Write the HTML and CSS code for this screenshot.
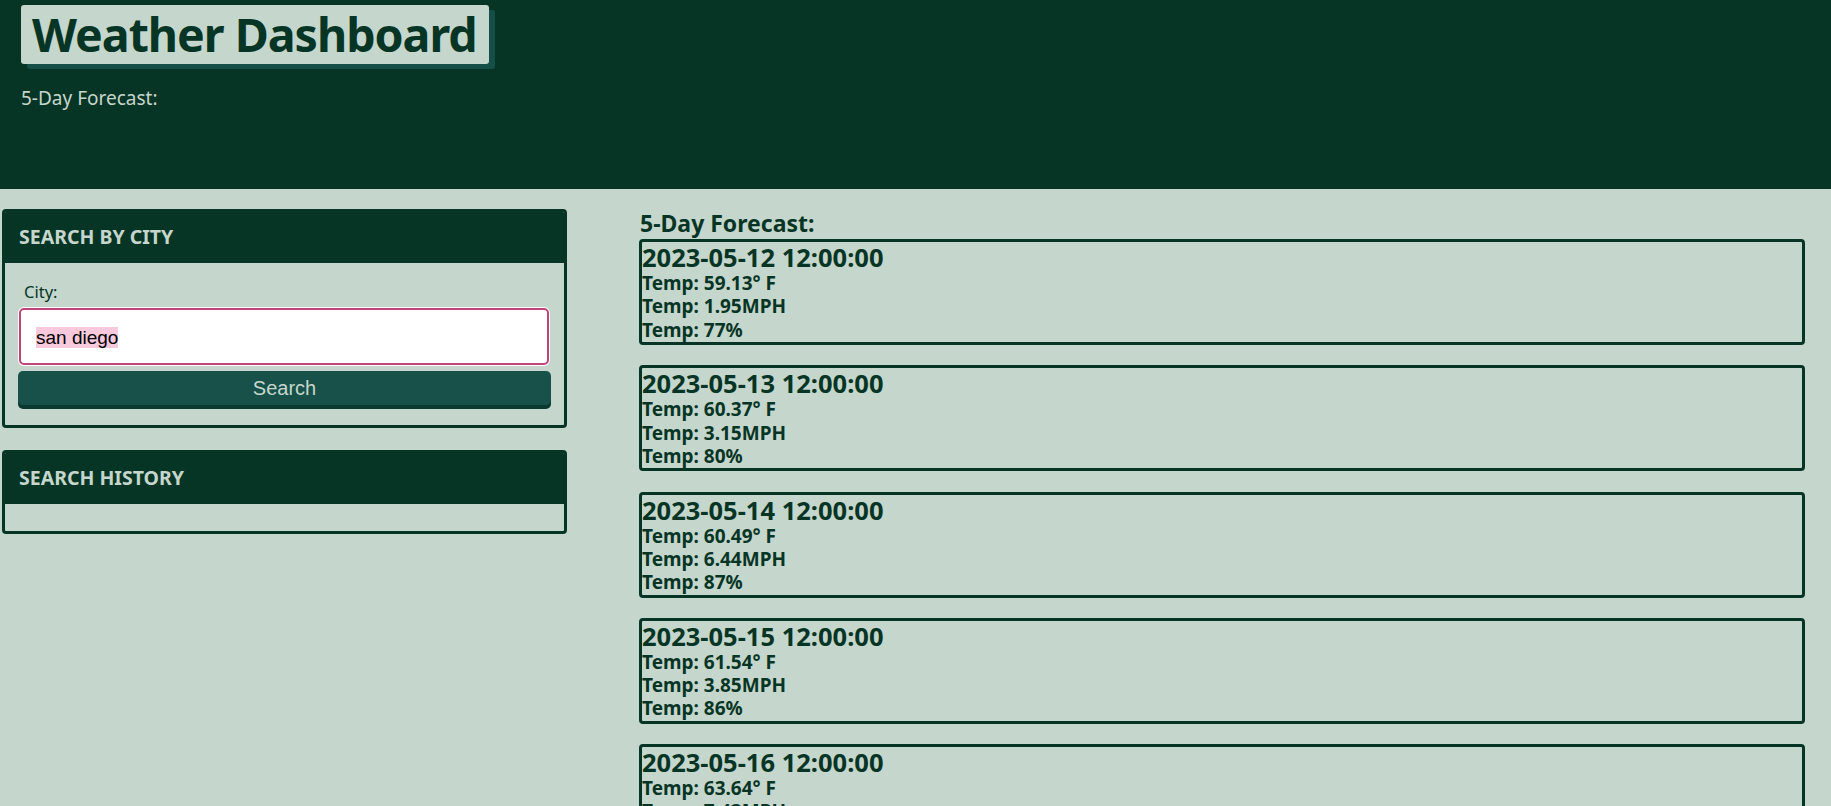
FILE: index.html
```html
<!DOCTYPE html>
<html lang="en">
<head>
<meta charset="utf-8">
<title>Weather Dashboard</title>
<link rel="stylesheet" href="styles.css">
</head>
<body>
<header class="top">
  <h1 class="title">Weather Dashboard</h1>
  <p class="top-sub">5-Day Forecast:</p>
</header>
<main class="main">
  <aside class="side">
    <section class="card">
      <h2 class="card-head">Search by City</h2>
      <div class="card-body">
        <label class="label">City:</label>
        <div class="input"><span class="sel">san diego</span></div>
        <button class="btn">Search</button>
      </div>
    </section>
    <section class="card">
      <h2 class="card-head">Search History</h2>
      <div class="card-body history"></div>
    </section>
  </aside>
  <section class="forecast">
    <h2 class="fc-title">5-Day Forecast:</h2>
    <div class="day">
      <h3 class="date">2023-05-12 12:00:00</h3>
      <p class="line">Temp: 59.13° F</p>
      <p class="line">Temp: 1.95MPH</p>
      <p class="line">Temp: 77%</p>
    </div>
    <div class="day">
      <h3 class="date">2023-05-13 12:00:00</h3>
      <p class="line">Temp: 60.37° F</p>
      <p class="line">Temp: 3.15MPH</p>
      <p class="line">Temp: 80%</p>
    </div>
    <div class="day">
      <h3 class="date">2023-05-14 12:00:00</h3>
      <p class="line">Temp: 60.49° F</p>
      <p class="line">Temp: 6.44MPH</p>
      <p class="line">Temp: 87%</p>
    </div>
    <div class="day">
      <h3 class="date">2023-05-15 12:00:00</h3>
      <p class="line">Temp: 61.54° F</p>
      <p class="line">Temp: 3.85MPH</p>
      <p class="line">Temp: 86%</p>
    </div>
    <div class="day">
      <h3 class="date">2023-05-16 12:00:00</h3>
      <p class="line">Temp: 63.64° F</p>
      <p class="line">Temp: 7.43MPH</p>
      <p class="line">Temp: 84%</p>
    </div>
  </section>
</main>
</body>
</html>
```
FILE: styles.css
```css
* { box-sizing: border-box; }
html, body { margin: 0; padding: 0; }
body {
  background: #c5d6cc;
  font-family: "Noto Sans", "Open Sans", sans-serif;
  color: #073525;
}
.top {
  background: #073525;
  height: 189px;
  padding: 5px 0 0 21px;
}
.title {
  display: inline-block;
  margin: 0;
  background: #c5d6cc;
  color: #073525;
  font-size: 46.5px;
  font-weight: 700;
  line-height: 59px;
  height: 59px;
  padding: 0 12px 0 11px;
  border-radius: 3px;
  box-shadow: 6px 5px 0 #154f48;
  letter-spacing: -1px;
}
.top-sub {
  margin: 22px 0 0;
  color: #c5d6cc;
  font-size: 19px;
  line-height: 24px;
}
.main {
  display: flex;
  align-items: flex-start;
}
.side {
  width: 565px;
  margin: 20px 0 0 2px;
  display: flex;
  flex-direction: column;
  gap: 22px;
}
.card {
  border: 3px solid #073525;
  border-radius: 4px;
  overflow: hidden;
}
.card-head {
  margin: 0;
  background: #073525;
  color: #c5d6cc;
  height: 51px;
  padding: 0 0 0 14px;
  font-size: 19.5px;
  font-weight: 700;
  line-height: 50px;
  text-transform: uppercase;
}
.card-body {
  padding: 18px 13px 20px 13px;
}
.card-body.history { padding: 0; height: 27px; }
.label {
  display: block;
  padding-left: 6px;
  font-size: 16.5px;
  line-height: 22px;
  margin-bottom: 5px;
}
.input {
  height: 57px;
  margin: 0 2px 0 1px;
  background: #fff;
  border: 2px solid #c0457a;
  border-radius: 5px;
  box-shadow: 0 0 0 1px #fff;
  padding: 17px 0 0 15px;
  font-family: "Liberation Sans", Arial, sans-serif;
  font-size: 19px;
  line-height: 22px;
  color: #000;
}
.sel { background: #f8c8dc; }
.btn {
  display: block;
  width: 100%;
  margin-top: 6px;
  height: 34px;
  background: #17514a;
  border: 0;
  border-radius: 5px;
  box-shadow: 0 4px 0 #0a3a30;
  color: #c5d6cc;
  font-family: "Liberation Sans", Arial, sans-serif;
  font-size: 20px;
  padding: 0;
}
.forecast {
  flex: 1;
  margin: 19px 26px 0 72px;
}
.fc-title {
  margin: 0;
  font-size: 23px;
  font-weight: 700;
  line-height: 31px;
  padding-left: 1px;
}
.day {
  border: 3px solid #073525;
  border-radius: 4px;
  height: 106px;
  margin-bottom: 20.3px;
  padding: 0;
}
.date {
  margin: 0;
  font-size: 25.5px;
  font-weight: 700;
  line-height: 30px;
}
.line {
  margin: 0;
  font-size: 19px;
  font-weight: 700;
  line-height: 23.3px;
}
```
